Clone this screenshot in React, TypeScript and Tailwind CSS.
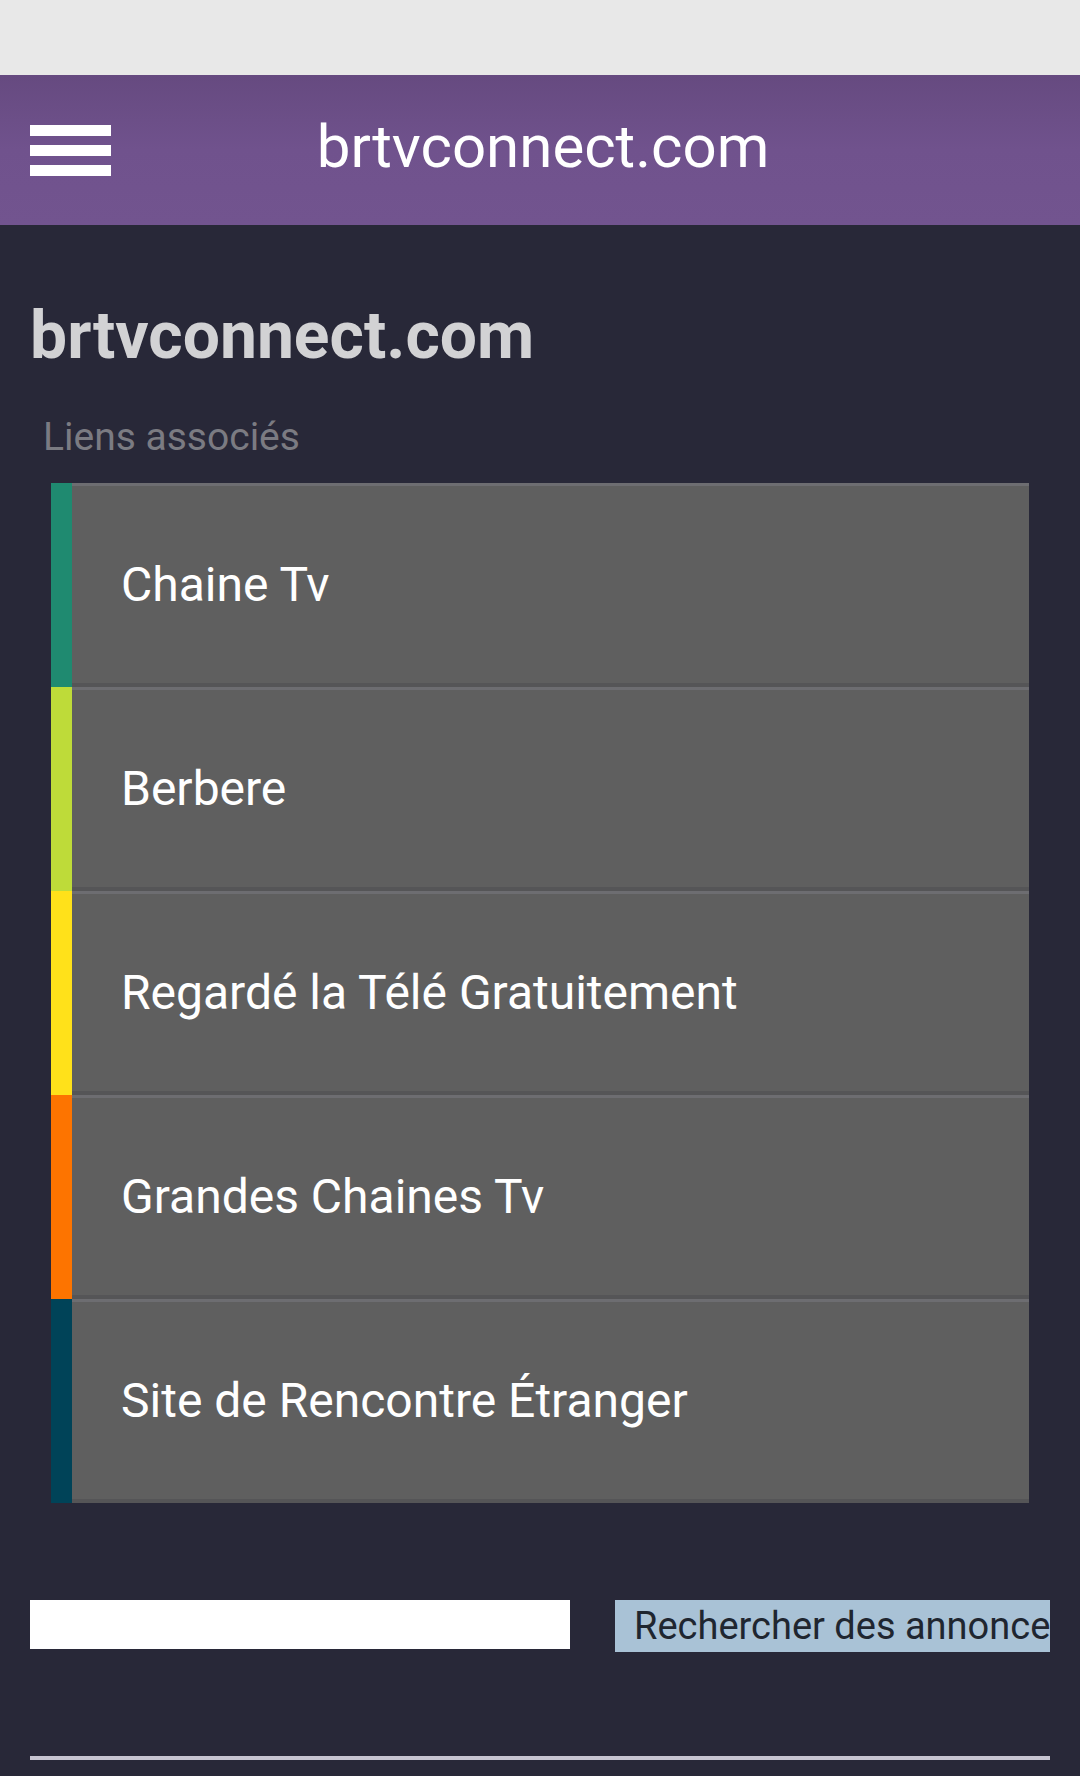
const LINKS = [
  { label: "Chaine Tv", color: "bg-[#1f8a70]" },
  { label: "Berbere", color: "bg-[#bedb39]" },
  { label: "Regardé la Télé Gratuitement", color: "bg-[#ffe11a]" },
  { label: "Grandes Chaines Tv", color: "bg-[#fd7400]" },
  { label: "Site de Rencontre Étranger", color: "bg-[#004358]" },
];

export default function App() {
  return (
    <div className="w-[1080px] min-h-[1776px] bg-[#282838] font-['Roboto','Liberation_Sans',sans-serif] overflow-hidden">
      {/* status area */}
      <div className="h-[75px] bg-[#e8e8e8]" />

      {/* top bar */}
      <header className="h-[150px] grid grid-cols-[1fr_auto_1fr] items-center bg-gradient-to-b from-[#664a80] via-[#70528d] to-[#72548f]">
        <button className="ml-[30px] flex w-[81px] flex-col gap-[9px]" aria-label="menu">
          <span className="block h-[11px] bg-white" />
          <span className="block h-[11px] bg-white" />
          <span className="block h-[11px] bg-white" />
        </button>
        <div className="pb-[7px] pl-[6px] text-[60px] leading-none text-white">brtvconnect.com</div>
        <div />
      </header>

      <main className="px-[30px]">
        <h1 className="mt-[78px] text-[66px] font-bold leading-none text-[#d2d2d4]">brtvconnect.com</h1>
        <p className="mt-[49px] pl-[13px] text-[39px] leading-none text-[#7b7b82]">Liens associés</p>

        <ul className="mx-[21px] mt-[26px]">
          {LINKS.map((l) => (
            <li key={l.label} className="flex h-[204px]">
              <div className={`w-[21px] ${l.color}`} />
              <a className="flex flex-1 items-center border-t-[3px] border-b-[4px] border-t-[#6d6d71] border-b-[#555557] bg-[#5f5f5f] pl-[49px] text-[48px] text-white">
                {l.label}
              </a>
            </li>
          ))}
        </ul>

        <form className="mt-[97px] flex items-start">
          <input className="h-[49px] w-[540px] bg-white outline-none" />
          <button
            type="button"
            className="ml-[45px] h-[52px] flex-1 overflow-hidden whitespace-nowrap bg-[#a9c2d6] pl-[19px] text-left text-[38px] leading-[46px] text-[#1f2630]"
          >
            Rechercher des annonces
          </button>
        </form>

        <div className="mt-[104px] h-[4px] bg-[#c6c4d0]" />
      </main>
    </div>
  );
}
